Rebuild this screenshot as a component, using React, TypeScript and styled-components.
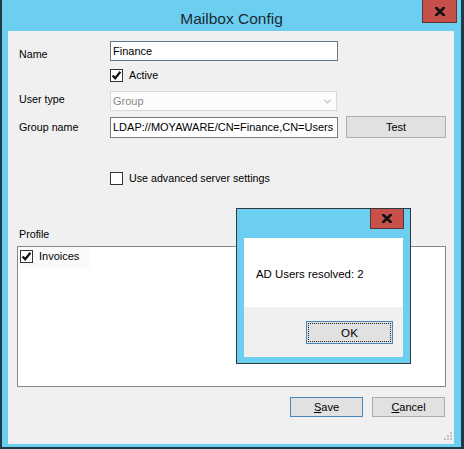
import React from "react";
import styled, { createGlobalStyle } from "styled-components";

const CYAN = "#6ccff0";
const DARK = "#1e3947";

const Global = createGlobalStyle`
  html, body { margin: 0; padding: 0; background: #ffffff; }
  body { font-family: "Liberation Sans", Arial, sans-serif; color: #000; }
  *, *::before, *::after { box-sizing: border-box; }
`;

const Frame = styled.div`
  position: relative;
  width: 464px;
  height: 449px;
  background: ${CYAN};
  border-left: 2px solid ${DARK};
  border-right: 3px solid ${DARK};
  border-bottom: 2px solid ${DARK};
  display: flex;
  flex-direction: column;
`;

const TitleBar = styled.div<{ $h: number }>`
  height: ${(p) => p.$h}px;
  flex: none;
  display: grid;
  grid-template-columns: 1fr auto 1fr;
  align-items: start;
`;

const TitleText = styled.div`
  grid-column: 2;
  padding-top: 9px;
  font-size: 15.5px;
  line-height: 20px;
  color: #1b2a33;
  white-space: nowrap;
`;

const CloseBtn = styled.div<{ $w: number; $h: number; $mr: number }>`
  grid-column: 3;
  justify-self: end;
  width: ${(p) => p.$w}px;
  height: ${(p) => p.$h}px;
  margin-right: ${(p) => p.$mr}px;
  background: #c7504b;
  border: 1px solid #5c3431;
  border-top: none;
  display: flex;
  align-items: center;
  justify-content: center;
`;

const Content = styled.div`
  flex: 1;
  margin: 0 7px 3px 6px;
  background: #f0f0f0;
  display: flex;
  flex-direction: column;
  padding: 10px 9px 0 11px;
  font-size: 10.7px;
  line-height: 13px;
`;

const Row = styled.div<{ $mt: number }>`
  display: grid;
  grid-template-columns: 91px 1fr;
  align-items: start;
  margin-top: ${(p) => p.$mt}px;
`;

const Label = styled.div<{ $dy?: number }>`
  padding-top: ${(p) => p.$dy ?? 0}px;
  white-space: nowrap;
`;

const Controls = styled.div`
  grid-column: 2;
  display: flex;
  align-items: flex-start;
`;

const TextBox = styled.div<{ $w: number; $h: number; $border: string; $mt?: number }>`
  width: ${(p) => p.$w}px;
  height: ${(p) => p.$h}px;
  margin-top: ${(p) => p.$mt ?? 0}px;
  border: 1px solid ${(p) => p.$border};
  background: #ffffff;
  padding: 0 0 0 2px;
  display: flex;
  align-items: center;
  overflow: hidden;
  white-space: nowrap;
  font-size: 11px;
`;

const Combo = styled.div<{ $w: number; $h: number }>`
  width: ${(p) => p.$w}px;
  height: ${(p) => p.$h}px;
  border: 1px solid #d9d9d9;
  background: #fcfcfc;
  padding: 0 5px 0 2px;
  display: flex;
  align-items: center;
  justify-content: space-between;
  color: #8a8a8a;
  font-size: 11px;
`;

const Button = styled.div<{ $w: number; $h: number; $default?: boolean; $ml?: number }>`
  width: ${(p) => p.$w}px;
  height: ${(p) => p.$h}px;
  margin-left: ${(p) => p.$ml ?? 0}px;
  border: 1px solid ${(p) => (p.$default ? "#4a86bd" : "#adadad")};
  background: #e1e1e1;
  display: flex;
  align-items: center;
  justify-content: center;
  font-size: 11px;
  white-space: nowrap;
`;

const CheckLine = styled.div`
  display: flex;
  align-items: center;
  gap: 6px;
  white-space: nowrap;
`;

const Box = styled.div`
  width: 13px;
  height: 13px;
  border: 1px solid #333333;
  background: #ffffff;
  flex: none;
  display: flex;
  align-items: center;
  justify-content: center;
`;

const SectionLabel = styled.div<{ $mt: number }>`
  margin-top: ${(p) => p.$mt}px;
`;

const ListBox = styled.div`
  margin-top: 5px;
  margin-left: -2px;
  width: 429px;
  height: 141px;
  border: 1px solid #828790;
  background: #ffffff;
  display: flex;
  flex-direction: column;
  align-items: flex-start;
`;

const ListItem = styled.div`
  width: 72px;
  height: 21px;
  background: #fafafa;
  padding: 3px 0 0 2px;
  display: flex;
  align-items: flex-start;
  gap: 6px;
  font-size: 11px;
  line-height: 13px;
`;

const ButtonRow = styled.div<{ $mt: number }>`
  margin-top: ${(p) => p.$mt}px;
  display: flex;
  justify-content: flex-end;
  gap: 9px;
`;

const GripRow = styled.div`
  margin-top: 15px;
  margin-right: -7px;
  display: flex;
  justify-content: flex-end;
`;

const Dialog = styled.div`
  position: absolute;
  left: 234px;
  top: 208px;
  width: 175px;
  height: 156px;
  background: ${CYAN};
  border: 1px solid #2e3a40;
  display: flex;
  flex-direction: column;
`;

const DialogBody = styled.div`
  flex: 1;
  margin: 0 7px 6px 7px;
  display: flex;
  flex-direction: column;
`;

const MessageArea = styled.div`
  height: 69px;
  background: #ffffff;
  padding: 29px 0 0 12px;
  font-size: 11.4px;
  line-height: 14px;
  white-space: nowrap;
`;

const DialogButtons = styled.div`
  flex: 1;
  background: #f0f0f0;
  padding: 14px 10px 0 0;
  display: flex;
  justify-content: flex-end;
  align-items: flex-start;
`;

const OkButton = styled.div`
  width: 87px;
  height: 23px;
  border: 1px solid #4a86bd;
  background: #e1e1e1;
  outline: 1px dotted #222;
  outline-offset: -3px;
  display: flex;
  align-items: center;
  justify-content: center;
  font-size: 11.6px;
`;

const CloseGlyph = () => (
  <svg width="10" height="9" viewBox="0 0 10 9">
    <path d="M1.2 0.8 L8.8 8.2 M8.8 0.8 L1.2 8.2" stroke="#111" strokeWidth="2.6" strokeLinecap="square" />
  </svg>
);

const CheckMark = () => (
  <svg width="11" height="11" viewBox="0 0 11 11">
    <path d="M1.6 5.4 L4.2 8.3 L9.4 1.8" stroke="#111" strokeWidth="2.2" fill="none" />
  </svg>
);

const Arrow = () => (
  <svg width="7" height="5" viewBox="0 0 7 5">
    <path d="M0.5 0.8 L3.5 3.8 L6.5 0.8" stroke="#bdbdbd" strokeWidth="1.2" fill="none" />
  </svg>
);

const Grip = () => (
  <svg width="8" height="8" viewBox="0 0 8 8">
    {[
      [6, 0],
      [6, 3],
      [3, 3],
      [6, 6],
      [3, 6],
      [0, 6],
    ].map(([x, y], i) => (
      <rect key={i} x={x} y={y} width="2" height="2" fill="#c4c4c4" />
    ))}
  </svg>
);

const Check = ({ checked }: { checked: boolean }) => <Box>{checked && <CheckMark />}</Box>;

export default function App() {
  return (
    <>
      <Global />
      <Frame>
        <TitleBar $h={31}>
          <TitleText>Mailbox Config</TitleText>
          <CloseBtn $w={35} $h={23} $mr={4}>
            <CloseGlyph />
          </CloseBtn>
        </TitleBar>
        <Content>
          <Row $mt={0}>
            <Label $dy={7}>Name</Label>
            <Controls>
              <TextBox $w={228} $h={20} $border="#65788a">
                Finance
              </TextBox>
            </Controls>
          </Row>
          <Row $mt={8}>
            <Controls>
              <CheckLine>
                <Check checked />
                Active
              </CheckLine>
            </Controls>
          </Row>
          <Row $mt={9}>
            <Label $dy={2}>User type</Label>
            <Controls>
              <Combo $w={227} $h={20}>
                Group
                <Arrow />
              </Combo>
            </Controls>
          </Row>
          <Row $mt={5}>
            <Label $dy={5}>Group name</Label>
            <Controls>
              <TextBox $w={228} $h={21} $mt={1} $border="#7a7a7a">
                LDAP://MOYAWARE/CN=Finance,CN=Users
              </TextBox>
              <Button $w={100} $h={22} $ml={8}>
                Test
              </Button>
            </Controls>
          </Row>
          <Row $mt={34}>
            <Controls>
              <CheckLine>
                <Check checked={false} />
                Use advanced server settings
              </CheckLine>
            </Controls>
          </Row>
          <SectionLabel $mt={43}>Profile</SectionLabel>
          <ListBox>
            <ListItem>
              <Check checked />
              Invoices
            </ListItem>
          </ListBox>
          <ButtonRow $mt={10}>
            <Button $w={73} $h={20} $default>
              <span>
                <u>S</u>ave
              </span>
            </Button>
            <Button $w={73} $h={20}>
              <span>
                <u>C</u>ancel
              </span>
            </Button>
          </ButtonRow>
          <GripRow>
            <Grip />
          </GripRow>
        </Content>
        <Dialog>
          <TitleBar $h={29}>
            <CloseBtn $w={34} $h={20} $mr={6}>
              <CloseGlyph />
            </CloseBtn>
          </TitleBar>
          <DialogBody>
            <MessageArea>AD Users resolved: 2</MessageArea>
            <DialogButtons>
              <OkButton>OK</OkButton>
            </DialogButtons>
          </DialogBody>
        </Dialog>
      </Frame>
    </>
  );
}
